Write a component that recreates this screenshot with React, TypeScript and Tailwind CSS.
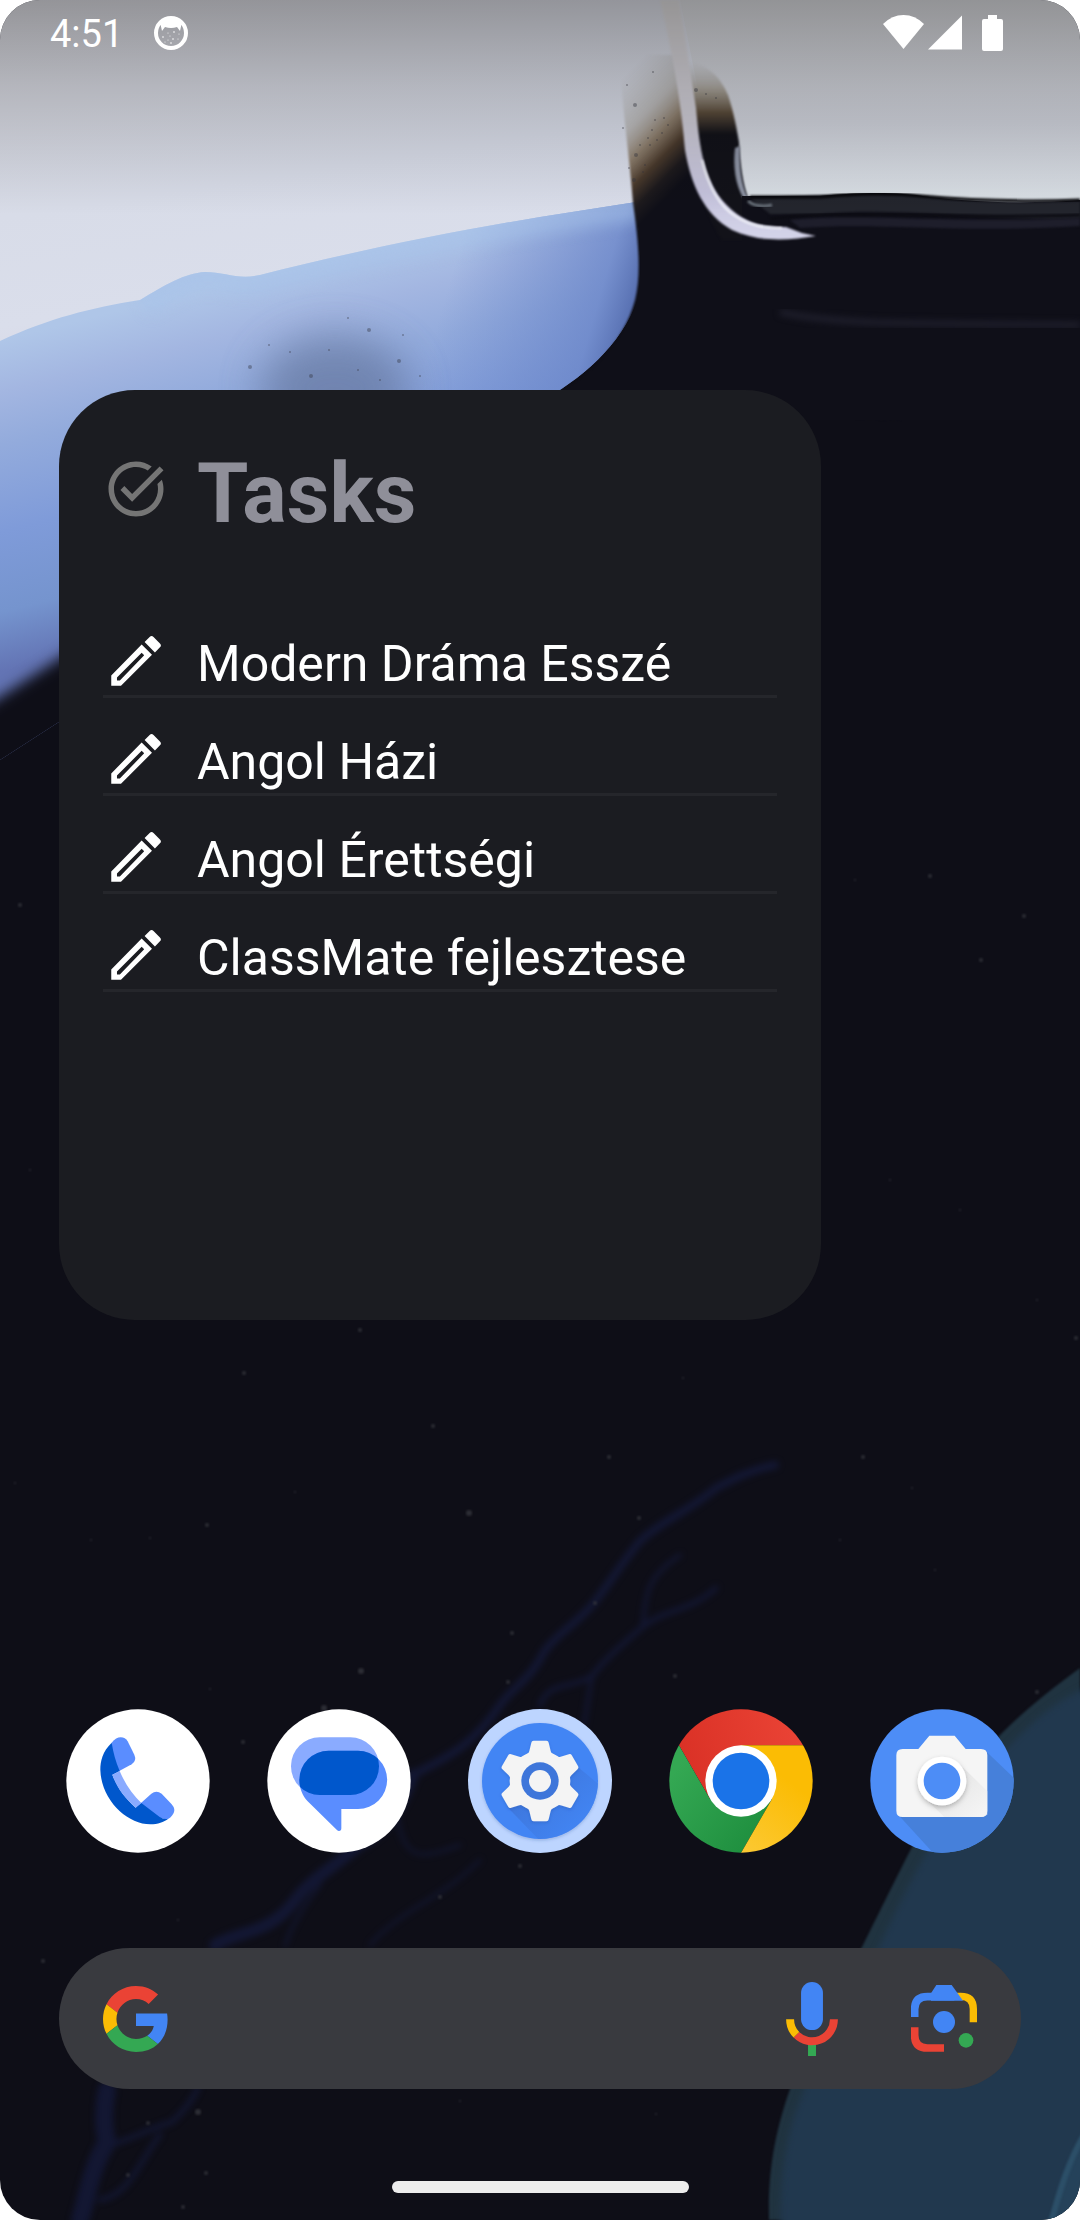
import React from "react";

const tasks = ["Modern Dráma Esszé", "Angol Házi", "Angol Érettségi", "ClassMate fejlesztese"];

const stars: [number, number, number][] = [
  [360, 1330, 2], [244, 1373, 2], [433, 1426, 2], [609, 1457, 2], [469, 1513, 3], [639, 1518, 2],
  [863, 1457, 2], [207, 1525, 2], [295, 1492, 1], [512, 1633, 2], [361, 1671, 3], [508, 1682, 2],
  [675, 1676, 2], [595, 1603, 2], [210, 1689, 1], [324, 1708, 3], [243, 1742, 2], [520, 1866, 2],
  [440, 1897, 2], [178, 1920, 1], [43, 1961, 2], [91, 1540, 1], [150, 1538, 1], [15, 1483, 1],
  [840, 1540, 1], [935, 1570, 1], [912, 1488, 1], [1076, 1338, 2], [683, 1378, 1], [198, 2112, 3],
  [148, 2123, 2], [128, 2175, 2], [206, 2173, 2], [183, 2207, 2], [460, 2101, 1], [656, 2114, 1],
  [855, 880, 1], [930, 876, 2], [981, 960, 2], [1024, 916, 2], [890, 1180, 1], [960, 1210, 1],
  [1037, 1300, 1], [20, 905, 2], [30, 1170, 1], [1037, 1692, 2],
];

const specks: [number, number, number][] = [
  [635, 105, 2], [653, 72, 1], [696, 90, 2], [623, 128, 1], [636, 155, 2], [634, 180, 2], [650, 145, 1],
  [662, 133, 1], [645, 165, 1], [668, 125, 1], [655, 120, 1], [627, 85, 1], [629, 168, 1], [648, 138, 1],
  [657, 140, 1], [640, 145, 1], [652, 130, 1], [664, 118, 1], [643, 172, 1], [716, 98, 1], [706, 94, 1],
  [348, 318, 1], [369, 330, 2], [399, 361, 2], [250, 367, 2], [311, 376, 2], [329, 350, 1], [269, 345, 1],
  [358, 370, 1], [403, 335, 1], [380, 380, 1], [290, 352, 1], [420, 376, 1],
];

function Wallpaper() {
  return (
    <svg
      className="absolute inset-0 h-full w-full"
      viewBox="0 0 1080 2220"
      preserveAspectRatio="xMidYMid slice"
      aria-hidden="true"
    >
      <defs>
        <linearGradient id="pale" x1="0" y1="0" x2="0.3" y2="1">
          <stop offset="0" stopColor="#dadae0" />
          <stop offset="0.5" stopColor="#d8dce8" />
          <stop offset="0.75" stopColor="#dadeeb" />
          <stop offset="1" stopColor="#d5d1e1" />
        </linearGradient>
        <linearGradient id="paleRight" x1="0" y1="0" x2="0" y2="1">
          <stop offset="0" stopColor="#d8d9dd" />
          <stop offset="0.6" stopColor="#d0d3dc" />
          <stop offset="1" stopColor="#dae0e6" />
        </linearGradient>
        <linearGradient id="wave" gradientUnits="userSpaceOnUse" x1="0" y1="340" x2="82" y2="669">
          <stop offset="0" stopColor="#afc6e8" />
          <stop offset="0.15" stopColor="#a3b6e1" />
          <stop offset="0.3" stopColor="#93abdc" />
          <stop offset="0.55" stopColor="#7f9bd9" />
          <stop offset="0.78" stopColor="#7594ce" />
          <stop offset="0.95" stopColor="#6374b4" />
        </linearGradient>
        <linearGradient id="waveEdge" gradientUnits="userSpaceOnUse" x1="450" y1="280" x2="640" y2="335">
          <stop offset="0" stopColor="#6d89cc" stopOpacity="0" />
          <stop offset="0.75" stopColor="#6a85c8" stopOpacity="0.75" />
          <stop offset="1" stopColor="#4a61a3" />
        </linearGradient>
        <linearGradient id="smudgeLeft" gradientUnits="userSpaceOnUse" x1="640" y1="60" x2="722" y2="142">
          <stop offset="0" stopColor="#b8b6b3" stopOpacity="0" />
          <stop offset="0.35" stopColor="#aaa69f" stopOpacity="0.6" />
          <stop offset="0.55" stopColor="#82705a" stopOpacity="0.85" />
          <stop offset="0.72" stopColor="#4b3b2d" />
          <stop offset="0.87" stopColor="#1d1a1d" />
          <stop offset="1" stopColor="#0f0f18" />
        </linearGradient>
        <linearGradient id="smudgeRight" gradientUnits="userSpaceOnUse" x1="0" y1="62" x2="0" y2="134">
          <stop offset="0" stopColor="#b6b5b4" stopOpacity="0" />
          <stop offset="0.4" stopColor="#9f988c" stopOpacity="0.9" />
          <stop offset="0.7" stopColor="#5b4c3b" />
          <stop offset="1" stopColor="#121219" />
        </linearGradient>
        <linearGradient id="ribbon" gradientUnits="userSpaceOnUse" x1="0" y1="0" x2="0" y2="240">
          <stop offset="0" stopColor="#dcdadb" />
          <stop offset="0.5" stopColor="#ceccd6" />
          <stop offset="0.8" stopColor="#c5c3dd" />
          <stop offset="1" stopColor="#d5d5ea" />
        </linearGradient>
        <linearGradient id="topShade" x1="0" y1="0" x2="0" y2="1">
          <stop offset="0" stopColor="#000" stopOpacity="0.32" />
          <stop offset="0.4" stopColor="#000" stopOpacity="0.17" />
          <stop offset="1" stopColor="#000" stopOpacity="0" />
        </linearGradient>
        <filter id="soft1" colorInterpolationFilters="sRGB"><feGaussianBlur stdDeviation="1" /></filter>
        <filter id="soft3" x="-20%" y="-20%" width="140%" height="140%" colorInterpolationFilters="sRGB"><feGaussianBlur stdDeviation="3" /></filter>
        <filter id="soft7" x="-30%" y="-30%" width="160%" height="160%" colorInterpolationFilters="sRGB"><feGaussianBlur stdDeviation="7" /></filter>
        <filter id="soft20" x="-50%" y="-50%" width="200%" height="200%" colorInterpolationFilters="sRGB"><feGaussianBlur stdDeviation="20" /></filter>
        <clipPath id="waveClip">
          <path d="M0 341C50 318 90 308 140 300C165 285 185 273 205 272C225 272 238 280 260 275C350 252 450 232 540 217L636 202C640 250 642 275 637 300C622 345 580 380 540 402L440 460L62 720L0 760Z" />
        </clipPath>
      </defs>

      <rect width="1080" height="2220" fill="#0e0e17" />
      <path d="M0 0H760V196H700L640 230L400 300L0 400Z" fill="url(#pale)" />
      <path d="M680 0H1080V204C1020 208 960 198 890 198H740L700 100Z" fill="url(#paleRight)" />

      <g clipPath="url(#waveClip)">
        <rect y="180" width="680" height="600" fill="url(#wave)" />
        <rect x="400" y="180" width="280" height="240" fill="url(#waveEdge)" />
        <path d="M140 300C165 285 185 273 205 272C225 272 238 280 260 275C350 252 450 232 540 217L640 202" fill="none" stroke="#a7c3ea" strokeWidth="36" opacity="0.5" filter="url(#soft7)" />
        <ellipse cx="335" cy="390" rx="75" ry="55" fill="#65779f" opacity="0.7" filter="url(#soft20)" />
        <path d="M-60 735L0 697L60 658L140 600V800H-60Z" fill="#0e0e17" filter="url(#soft7)" />
      </g>

      <path
        d="M620 55C622 110 630 160 633 203C639 245 641 275 635 300C624 342 590 378 540 404L900 420V230H745L722 215C700 190 692 150 688 120L676 55Z"
        fill="url(#smudgeLeft)"
        filter="url(#soft1)"
      />
      <path
        d="M680 60C706 62 720 76 728 95C734 113 737 130 739 142C740 165 743 185 748 198V240H722C700 205 694 170 690 130Z"
        fill="url(#smudgeRight)"
        filter="url(#soft1)"
      />
      <path d="M740 146C739 165 741 185 748 198L744 199C735 185 733 165 735 148Z" fill="#8e94a5" filter="url(#soft1)" />

      <path d="M742 196H820C860 193 890 191 930 197C990 204 1040 203 1080 200V420H742Z" fill="#0f0f18" />
      <path d="M750 198C820 196 880 192 930 197C990 204 1040 203 1080 201V218C1000 222 900 206 820 214L770 214Z" fill="#23252d" filter="url(#soft1)" />
      <path d="M770 219C850 208 960 220 1080 215" fill="none" stroke="#0c0c13" strokeWidth="3" filter="url(#soft1)" />
      <path d="M790 220C860 213 960 224 1080 218V226C960 234 880 222 800 228Z" fill="#1e1e2b" filter="url(#soft1)" />
      <path d="M748 201C754 206 762 207 772 205" fill="none" stroke="#687079" strokeWidth="3" filter="url(#soft1)" />
      <path d="M750 197H820C860 194 880 192 920 196C980 201 1030 202 1080 200" fill="none" stroke="#07070b" strokeWidth="3" filter="url(#soft1)" />
      <path d="M780 312C840 326 930 323 1080 325" fill="none" stroke="#1f1f2c" strokeWidth="6" filter="url(#soft3)" />

      <path
        d="M660 0H679L696 108C699 140 702 175 722 200C745 226 765 227 786 227L802 233L816 236C790 240 760 243 732 230C704 214 691 185 685 150C682 110 674 60 660 0Z"
        fill="url(#ribbon)"
        filter="url(#soft1)"
      />
      <path d="M702 160C708 185 718 205 735 216C750 226 765 228 782 228" fill="none" stroke="#f4f6fb" strokeWidth="2" filter="url(#soft1)" />

      {specks.map(([x, y, r]) => (
        <circle key={`${x}-${y}`} cx={x} cy={y} r={r} fill="#31343f" opacity="0.4" />
      ))}

      <g fill="none" stroke="#18204f" strokeLinecap="round" opacity="0.5" filter="url(#soft3)">
        <path d="M775 1465C750 1470 735 1478 716 1488C690 1510 660 1522 640 1541C620 1565 605 1590 592 1605C575 1625 555 1635 544 1652C530 1680 515 1685 500 1705C470 1750 440 1760 413 1775" strokeWidth="8" />
        <path d="M716 1588C690 1612 660 1610 640 1629C615 1650 600 1665 592 1676C570 1690 550 1680 540 1705" strokeWidth="5" />
        <path d="M680 1555C650 1575 645 1590 643 1625M592 1676L584 1725" strokeWidth="4" />
        <path d="M413 1775C400 1810 385 1830 358 1846C330 1870 310 1880 296 1899C270 1935 240 1930 215 1945" strokeWidth="12" />
        <path d="M398 1820C405 1860 420 1860 460 1845M320 1885C300 1910 290 1930 285 1946M480 1860C440 1900 400 1910 370 1945" strokeWidth="3" />
        <path d="M107 2090C102 2115 104 2130 107 2142C90 2170 88 2195 80 2220" strokeWidth="18" />
        <path d="M110 2145C130 2140 145 2130 172 2122C190 2105 195 2095 198 2088M160 2135C140 2160 130 2195 100 2200" strokeWidth="5" />
      </g>

      {stars.map(([x, y, r]) => (
        <circle key={`${x}-${y}`} cx={x} cy={y} r={r} fill="#34353c" opacity="0.8" filter="url(#soft1)" />
      ))}

      <path d="M1080 1668C1050 1690 1025 1710 1000 1735C960 1775 935 1805 912 1847C890 1890 878 1915 863 1945C830 2005 805 2045 790 2089C772 2140 768 2180 769 2220H1080Z" fill="#203340" filter="url(#soft1)" />
      <path d="M1090 1685C1050 1705 1035 1720 1010 1745C970 1785 945 1815 925 1855C900 1900 890 1925 875 1955C845 2015 815 2055 802 2095C784 2140 780 2180 781 2230H1090Z" fill="#21384e" filter="url(#soft3)" />
      <path d="M1090 2130C1065 2170 1058 2200 1050 2225H1090Z" fill="#25425a" filter="url(#soft1)" />
      <path d="M1084 2135C1064 2170 1058 2200 1050 2225" fill="none" stroke="#2c4f68" strokeWidth="6" filter="url(#soft1)" />

      <rect width="1080" height="215" fill="url(#topShade)" />
    </svg>
  );
}

function StatusBar() {
  return (
    <header className="flex h-[66px] items-center justify-between pr-[77px] pl-[50px] text-white">
      <div className="flex items-center gap-[30px]">
        <time className="pt-0.5 text-[38px] leading-[44px]">4:51</time>
        <svg className="h-9 w-9" viewBox="0 0 36 36" aria-hidden="true">
          <circle cx="18" cy="18" r="15" fill="none" stroke="#fff" strokeWidth="4" />
          <path d="M7 7Q18 -2 29 7L27 16L24 12Q18 14 12 12L9 16Z" fill="#fff" />
          <g fill="#fff">
            <circle cx="10" cy="22" r="0.800" /><circle cx="15" cy="18" r="0.500" /><circle cx="21" cy="17" r="0.800" />
            <circle cx="26" cy="19" r="0.500" /><circle cx="20" cy="24" r="0.800" /><circle cx="15" cy="25" r="0.500" />
            <circle cx="25" cy="24" r="0.500" /><circle cx="18" cy="28" r="0.800" /><circle cx="12" cy="27" r="0.500" />
            <circle cx="17" cy="21" r="0.500" />
          </g>
        </svg>
      </div>
      <svg className="h-9 w-[120px]" viewBox="0 0 120 36" fill="#fff" aria-label="Wi-Fi, signal, battery" role="img">
        <path d="M0 9Q9 0 20.500 0Q32 0 41 9L20.500 34Z" />
        <path d="M45 34.500L79 0.500V34.500Z" />
        <path d="M105 0H114V4H118Q120 4 120 6V34Q120 36 118 36H101Q99 36 99 34V6Q99 4 101 4H105Z" />
      </svg>
    </header>
  );
}

function PencilIcon() {
  return (
    <svg className="h-[66px] w-[66px] shrink-0" viewBox="0 0 24 24" fill="#fff" aria-hidden="true">
      <path d="M3 17.460V21h3.540L17.810 9.730l-3.750-3.750L3 17.250zM6.130 19.070H5.080V18.020L14.060 9.020L14.980 9.940ZM20.710 5.630L18.370 3.290a1 1 0 0 0-1.410 0L15.130 5.120l3.750 3.750 1.830-1.830a1 1 0 0 0 0-1.410Z" fillRule="evenodd" />
    </svg>
  );
}

function TasksWidget() {
  return (
    <section
      aria-labelledby="tasks-title"
      className="min-h-[930px] w-[762px] max-w-full rounded-[76px] bg-[#1b1c21] px-11 pt-[55px] pb-11"
    >
      <div className="flex items-start gap-7">
        <svg className="mt-[11px] h-[66px] w-[66px] shrink-0" viewBox="0 0 24 24" fill="#757575" aria-hidden="true">
          <path d="M22 5.180 10.590 16.600l-4.240-4.240 1.410-1.410 2.830 2.830 10-10L22 5.180zM19.790 10.220c.13.570.21 1.170.21 1.780 0 4.420-3.580 8-8 8s-8-3.580-8-8 3.580-8 8-8c1.580 0 3.040.460 4.280 1.250l1.440-1.440C16.100 2.670 14.130 2 12 2 6.480 2 2 6.480 2 12s4.480 10 10 10 10-4.480 10-10c0-1.190-.22-2.330-.6-3.390l-1.610 1.610z" />
        </svg>
        <h1 id="tasks-title" className="text-[83px] leading-[98px] font-bold text-[#8f8f99]">Tasks</h1>
      </div>
      <ul className="mt-[57px]">
        {tasks.map((task) => (
          <li key={task} className="flex min-h-[98px] items-end gap-7 border-b-[3px] border-[#25262b] pb-px text-white">
            <PencilIcon />
            <span className="text-[50px] leading-[60px]">{task}</span>
          </li>
        ))}
      </ul>
    </section>
  );
}

function PhoneIcon() {
  return (
    <svg className="h-full w-full" viewBox="79 58 432 432" aria-hidden="true">
      <circle cx="295" cy="274" r="215" fill="#fff" />
      <path d="M216 159C225 148 234 143 243 143Q257 143 264 155L284 195Q292 213 276 224L218 255Z" fill="#5a8dff" />
      <path d="M288 354L335 312Q350 300 366 312L396 344Q408 358 402 370C397 380 390 388 380 389L305 375Z" fill="#5a8dff" />
      <path d="M216 159C188 186 182 215 182 240C184 330 262 404 332 404C355 404 372 397 386 387Q372 390 360 382L305 340L288 354C255 325 232 292 218 255L240 244C228 215 221 190 216 159Z" fill="#0057cc" />
      <path d="M218 255L240 244C255 280 278 315 305 340L288 354C255 325 230 292 218 255Z" fill="#8aabff" />
    </svg>
  );
}

function MessagesIcon() {
  return (
    <svg className="h-full w-full" viewBox="683 58 432 432" aria-hidden="true">
      <defs>
        <clipPath id="bubble"><rect x="755" y="143" width="264" height="173" rx="86" /></clipPath>
      </defs>
      <circle cx="899" cy="274" r="215" fill="#fff" />
      <rect x="755" y="143" width="264" height="173" rx="86" fill="#8aabff" />
      <path d="M868 183H956A87 87 0 0 1 956 358H906V416Q906 424 899 424Q896 424 892 420L805 335C790 320 780 295 780 271A88 88 0 0 1 868 183Z" fill="#5a8dff" />
      <path clipPath="url(#bubble)" d="M868 183H956A87 87 0 0 1 956 358H906L805 335C790 320 780 295 780 271A88 88 0 0 1 868 183Z" fill="#0057cc" />
    </svg>
  );
}

function SettingsIcon() {
  return (
    <svg className="h-full w-full" viewBox="-216 -216 432 432" aria-hidden="true">
      <defs>
        <clipPath id="dial"><circle r="174" /></clipPath>
        <linearGradient id="dialShade" gradientUnits="userSpaceOnUse" x1="0" y1="0" x2="130" y2="130">
          <stop offset="0" stopColor="#3b6fd0" />
          <stop offset="1" stopColor="#4284f2" />
        </linearGradient>
        <filter id="gearShadow" x="-20%" y="-20%" width="140%" height="140%">
          <feDropShadow dx="0" dy="4" stdDeviation="5" floodColor="#1c3f8a" floodOpacity="0.25" />
        </filter>
      </defs>
      <circle r="216" fill="#bdd5ff" />
      <circle r="174" fill="#4285f4" filter="url(#gearShadow)" />
      <path clipPath="url(#dial)" d="M114 -42L200 30V200H20L-100 76Z" fill="url(#dialShade)" opacity="0.6" />
      <g fill="#f4f4f4" filter="url(#gearShadow)">
        <circle r="91" />
        {[0, 60, 120, 180, 240, 300].map((angle) => (
          <path key={angle} transform={`rotate(${angle})`} d="M-26 -115Q-25 -121 -19 -121H19Q25 -121 26 -115L32 -90Q34 -81 45 -78L0 -60L-45 -78Q-34 -81 -32 -90Z" />
        ))}
      </g>
      <circle r="56" fill="#3e76da" />
      <circle r="33" fill="#f4f4f4" />
    </svg>
  );
}

function ChromeIcon() {
  return (
    <svg className="h-full w-full" viewBox="-216 -216 432 432" aria-hidden="true">
      <defs>
        <clipPath id="disc"><circle r="215" /></clipPath>
        <linearGradient id="chromeRed" gradientUnits="userSpaceOnUse" x1="-186" y1="0" x2="186" y2="-107"><stop offset="0" stopColor="#d93025" /><stop offset="1" stopColor="#ea4335" /></linearGradient>
        <linearGradient id="chromeGreen" x1="0" y1="0" x2="1" y2="1"><stop offset="0.2" stopColor="#34a853" /><stop offset="0.9" stopColor="#1e8e3e" /></linearGradient>
        <linearGradient id="chromeYellow" x1="0" y1="1" x2="0.5" y2="0"><stop offset="0" stopColor="#fcc934" /><stop offset="0.8" stopColor="#fbbc04" /></linearGradient>
      </defs>
      <g clipPath="url(#disc)">
        <path d="M-216 -216H216V-107H0V0L-93 54L-186 -107Z" fill="url(#chromeRed)" />
        <path d="M-216 -160L-186 -107L-93 54L0 0L93 54L0 216H-216Z" fill="url(#chromeGreen)" />
        <path d="M0 -107H216V216H0L93 54L0 0Z" fill="url(#chromeYellow)" />
      </g>
      <circle r="107" fill="#fff" />
      <circle r="85" fill="#1a73e8" />
    </svg>
  );
}

function CameraIcon() {
  return (
    <svg className="h-full w-full" viewBox="92 208 432 432" aria-hidden="true">
      <defs>
        <clipPath id="cameraDisc"><circle cx="308" cy="424" r="215" /></clipPath>
        <filter id="lensShadow" x="-30%" y="-30%" width="160%" height="160%">
          <feDropShadow dx="0" dy="7" stdDeviation="8" floodColor="#000" floodOpacity="0.25" />
        </filter>
        <linearGradient id="lensLong" x1="0" y1="0" x2="1" y2="1"><stop offset="0.4" stopColor="#dedede" /><stop offset="0.9" stopColor="#f3f3f3" /></linearGradient>
      </defs>
      <g clipPath="url(#cameraDisc)">
        <rect x="92" y="208" width="432" height="432" fill="#4d8df6" />
        <path d="M440 335L540 430V660H300L178 527Z" fill="#4680da" />
      </g>
      <path d="M190 328H237L270 288H346L379 328H425Q444 328 444 347V513Q444 532 425 532H190Q171 532 171 513V347Q171 328 190 328Z" fill="#f5f5f5" />
      <path d="M360 372L444 455V525L430 532H315L256 475Z" fill="url(#lensLong)" opacity="0.6" />
      <circle cx="308" cy="424" r="73" fill="#fff" filter="url(#lensShadow)" />
      <circle cx="308" cy="424" r="55" fill="#4d8df6" />
    </svg>
  );
}

const apps = [
  { name: "Phone", Icon: PhoneIcon },
  { name: "Messages", Icon: MessagesIcon },
  { name: "Settings", Icon: SettingsIcon },
  { name: "Chrome", Icon: ChromeIcon },
  { name: "Camera", Icon: CameraIcon },
];

function SearchBar() {
  return (
    <form role="search" className="mx-[59px] mt-[95px] flex h-[141px] items-center rounded-full bg-[#393a3f] px-11">
      <svg className="h-[66px] w-[66px] shrink-0" viewBox="0 0 48 48" aria-hidden="true">
        <path fill="#EA4335" d="M24 9.5c3.54 0 6.71 1.22 9.21 3.6l6.850-6.850C35.9 2.380 30.470 0 24 0 14.620 0 6.510 5.380 2.560 13.220l7.980 6.190C12.430 13.720 17.740 9.5 24 9.5z" />
        <path fill="#4285F4" d="M46.980 24.550c0-1.570-.15-3.090-.38-4.550H24v9.020h12.940c-.58 2.960-2.260 5.480-4.780 7.180l7.730 6c4.510-4.180 7.090-10.360 7.090-17.650z" />
        <path fill="#FBBC05" d="M10.530 28.590c-.48-1.450-.76-2.990-.76-4.590s.27-3.140.76-4.590l-7.980-6.190C.920 16.460 0 20.120 0 24c0 3.880.92 7.540 2.560 10.780l7.970-6.190z" />
        <path fill="#34A853" d="M24 48c6.480 0 11.930-2.130 15.890-5.810l-7.730-6c-2.150 1.450-4.920 2.300-8.160 2.300-6.260 0-11.570-4.220-13.470-9.910l-7.980 6.190C6.510 42.620 14.620 48 24 48z" />
      </svg>
      <input type="search" aria-label="Search" className="h-full min-w-0 flex-1 bg-transparent px-6 text-[40px] text-white outline-none" />
      <button type="button" aria-label="Voice search" className="shrink-0">
        <svg className="h-[74px] w-[52px]" viewBox="255 155 156 223" fill="none">
          <rect x="300" y="155" width="66" height="145" rx="33" fill="#4285f4" />
          <rect x="321" y="340" width="24" height="38" fill="#34a853" />
          <path d="M399 267A66 66 0 0 1 286 314" stroke="#ea4335" strokeWidth="24" />
          <path d="M286 314A66 66 0 0 1 267 267" stroke="#fbbc04" strokeWidth="24" />
        </svg>
      </button>
      <button type="button" aria-label="Google Lens" className="ml-[73px] shrink-0">
        <svg className="h-[67px] w-[66px]" viewBox="630 165 198 201" fill="none">
          <path d="M765 199H779Q817 199 817 237V277" stroke="#fbbc04" strokeWidth="22" />
          <path d="M641 261V238Q641 200 679 200H760" stroke="#4285f4" strokeWidth="23" />
          <path d="M690 190L706 165H752L786 212H690Z" fill="#4285f4" />
          <path d="M641 292V316Q641 354 679 354H729" stroke="#ea4335" strokeWidth="23" />
          <circle cx="729" cy="276" r="33" fill="#4285f4" />
          <circle cx="795" cy="331" r="22" fill="#34a853" />
        </svg>
      </button>
    </form>
  );
}

export default function App() {
  return (
    <div className="bg-white">
      <div className="relative isolate min-h-screen overflow-hidden rounded-[40px] font-['Roboto',sans-serif]">
        <Wallpaper />
        <div className="relative flex min-h-screen flex-col">
          <StatusBar />
          <main className="mt-[324px] flex-1 px-[59px]">
            <TasksWidget />
          </main>
          <nav aria-label="Apps" className="flex items-center justify-between px-[66px]">
            {apps.map(({ name, Icon }) => (
              <button key={name} type="button" aria-label={name} className="size-36 rounded-full">
                <Icon />
              </button>
            ))}
          </nav>
          <SearchBar />
          <div className="mx-auto mt-[92px] mb-[27px] h-3 w-[297px] rounded-full bg-[#ececec]" />
        </div>
      </div>
    </div>
  );
}
